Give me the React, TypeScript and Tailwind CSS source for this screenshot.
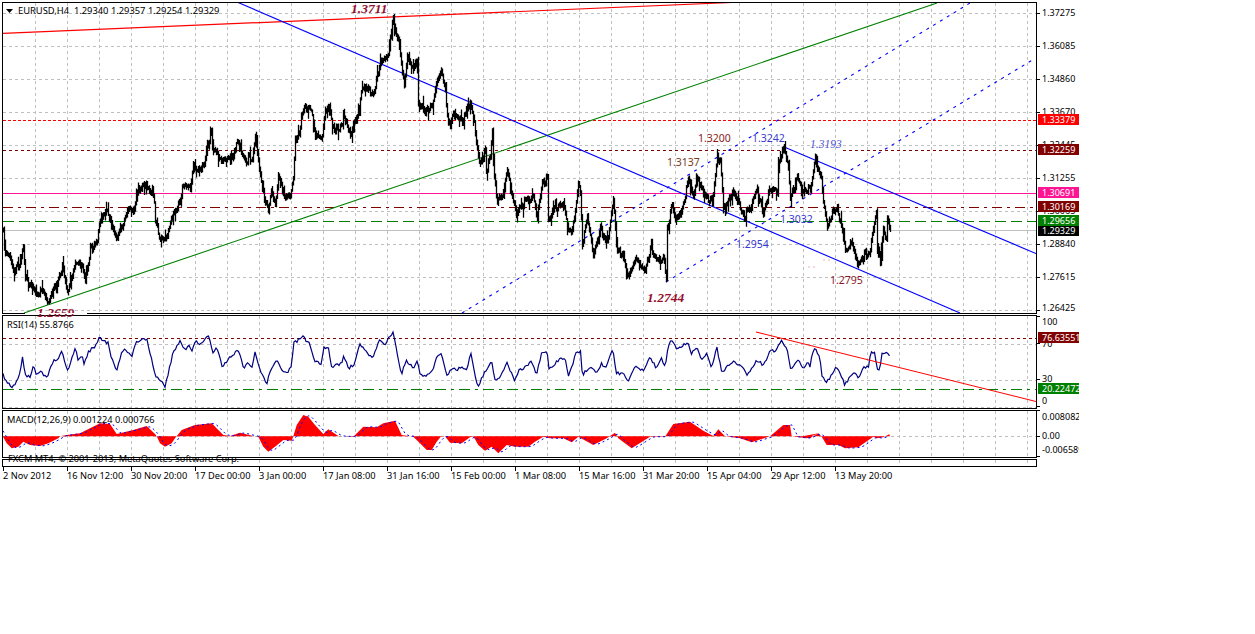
import { useMemo } from "react";

type Pt = [number, number];

// price path traced from the chart, in page pixels
const PRICE: Pt[] = [
  [3,230],[5,253],[10,258],[13,273],[20,263],[23,247],[25,277],[33,287],[36,295],[43,290],[48,302],[55,287],[62,268],[68,293],[75,263],[82,267],[85,282],[90,250],[97,243],[100,218],[108,213],[112,230],[117,240],[125,217],[128,208],[133,215],[137,195],[146,180],[148,190],[154,200],[155,220],[160,240],[167,238],[173,213],[180,203],[182,188],[190,190],[193,167],[203,167],[207,147],[211,132],[213,150],[222,163],[230,160],[238,140],[245,160],[252,157],[255,133],[260,173],[263,193],[268,210],[271,190],[275,207],[278,177],[283,193],[290,200],[293,180],[295,140],[299,137],[301,113],[304,105],[312,113],[315,137],[322,137],[325,110],[329,107],[332,128],[342,127],[343,113],[348,133],[353,130],[358,110],[362,85],[373,95],[377,78],[382,57],[388,53],[393,20],[398,40],[402,73],[404,83],[407,53],[413,70],[417,57],[418,107],
  [422,103],[425,113],[432,103],[435,87],[442,72],[445,93],[448,123],[455,113],[462,120],[470,100],[473,113],[475,137],[480,163],[485,150],[486,170],[490,157],[492,127],[494,180],[497,200],[502,193],[507,170],[512,197],[516,217],[520,207],[528,200],[533,195],[537,217],[542,182],[547,180],[548,220],[553,210],[563,200],[567,227],[572,233],[578,185],[580,193],[582,243],[587,217],[593,253],[600,227],[607,243],[613,200],[617,250],[623,253],[628,278],[635,260],[645,273],[650,248],[660,263],[664,257],[666,282],[667,230],[672,203],[675,220],[682,207],[688,182],[693,197],[697,175],[702,190],[712,203],[717,158],[720,160],[723,207],[733,190],[743,217],[750,210],[757,190],[763,213],[770,187],[777,193],[778,163],[783,148],[788,163],[790,200],[797,177],[803,193],[810,190],[815,160],[821,180],[823,203],[827,230],[830,217],[837,207],[842,230],[845,253],[852,243],[857,267],[865,253],[870,253],[872,230],[876,213],[877,247],[880,260],[883,227],[886,237],[887,215],[890,230],
];

// rsi and macd were read off 3x crops, so these stay in crop units
const RSI_A: Pt[] = [[8,185],[15,210],[35,232],[50,215],[60,185],[68,142],[75,195],[90,200],[100,170],[110,195],[125,185],[140,205],[160,150],[170,155],[185,120],[203,185],[225,115],[235,150],[250,135],[252,165],[265,125],[285,110],[298,85],[325,100],[335,145],[350,180],[365,125],[375,120],[395,140],[410,95],[440,85],[455,150],[468,200],[495,228],[505,190],[520,125],[540,95],[555,120],[570,105],[575,125],[585,95],[605,105],[625,72],[640,130],[650,115],[668,172],[690,140],[715,120],[733,180],[740,155],[755,175],[765,125],[780,180],[800,225],[810,185],[830,150],[845,180],[860,190],[875,170],[880,100],[910,80],[930,105],[945,155],[965,160],[970,115],[985,112],[993,170],[1025,160],[1030,135],[1045,175],[1062,165],[1080,100],[1100,130],[1118,140],[1140,90],[1155,105],[1178,65],[1190,120],[1205,195],[1218,150],[1240,175],[1250,150]];
const RSI_B: Pt[] = [[0,190],[15,200],[40,180],[48,145],[65,130],[80,200],[95,175],[110,180],[125,170],[140,180],[152,128],[165,200],[175,230],[190,195],[215,155],[225,210],[240,205],[260,155],[285,215],[295,185],[315,170],[335,155],[350,195],[365,125],[382,125],[385,180],[410,155],[435,140],[445,200],[470,125],[482,125],[487,195],[510,170],[530,190],[545,160],[555,175],[578,120],[590,190],[610,190],[625,218],[645,170],[670,180],[690,140],[710,175],[725,145],[735,175],[745,105],[755,90],[770,115],[805,100],[815,130],[830,110],[845,150],[860,130],[875,175],[890,110],[905,185],[940,155],[970,170],[980,195],[1010,150],[1030,165],[1050,125],[1070,120],[1085,90],[1105,130],[1110,180],[1130,155],[1140,155],[1150,180],[1165,155],[1170,175]];
const RSI_C: Pt[] = [[8,185],[25,170],[45,112],[60,145],[65,195],[80,218],[95,195],[110,170],[135,225],[155,190],[165,190],[175,205],[190,175],[205,170],[212,130],[225,128],[232,180],[238,185],[245,135],[262,122],[270,145]];

const MACD_A: Pt[] = [[8,379],[20,400],[35,415],[55,410],[70,395],[90,405],[120,408],[145,400],[175,385],[180,379],[200,375],[240,370],[300,340],[330,342],[350,372],[400,360],[440,348],[465,372],[470,379],[480,400],[495,410],[515,400],[525,385],[530,379],[545,360],[585,345],[635,340],[670,375],[690,378],[720,368],[760,378],[775,380],[790,410],[805,425],[825,410],[850,390],[875,392],[880,379],[890,345],[910,315],[925,320],[945,345],[970,372],[985,358],[1015,378],[1060,380],[1090,350],[1130,352],[1150,340],[1185,332],[1205,375],[1240,380]];
const MACD_B: Pt[] = [[0,400],[20,420],[35,420],[50,395],[62,380],[75,379],[90,398],[125,400],[150,382],[160,379],[175,405],[195,422],[215,410],[235,430],[260,405],[285,410],[325,410],[345,395],[370,380],[390,385],[430,385],[455,397],[475,380],[520,405],[560,385],[585,368],[595,385],[635,415],[690,380],[735,380],[760,342],[810,335],[850,362],[880,378],[895,358],[915,379],[960,385],[995,397],[1050,379],[1090,345],[1110,345],[1115,379],[1160,385],[1195,370]];
const MACD_C: Pt[] = [[0,380],[30,385],[55,370],[65,380],[80,405],[115,405],[135,415],[175,412],[220,380],[230,385],[250,382],[268,373]];

const shift = (pts: Pt[], x0: number, y0: number): Pt[] => pts.map(([x, y]) => [x0 + x / 3, y0 + y / 3]);

const rsiPts = [...shift(RSI_A, 0, 310), ...shift(RSI_B, 420, 310), ...shift(RSI_C, 800, 310)];
const macdPts = [...shift(MACD_A, 0, 310), ...shift(MACD_B, 420, 310), ...shift(MACD_C, 800, 310)];

const GRID_X = Array.from({ length: 32 }, (_, i) => 35.5 + i * 32);

function rng(seed: number) {
  let s = seed;
  return () => {
    s = (s + 0x6d2b79f5) | 0;
    let t = Math.imul(s ^ (s >>> 15), 1 | s);
    t = (t + Math.imul(t ^ (t >>> 7), 61 | t)) ^ t;
    return ((t ^ (t >>> 14)) >>> 0) / 4294967296;
  };
}

function interp(pts: Pt[], x: number) {
  for (let i = 1; i < pts.length; i++) {
    if (x <= pts[i][0]) {
      const [x0, y0] = pts[i - 1];
      const [x1, y1] = pts[i];
      return y0 + ((y1 - y0) * (x - x0)) / Math.max(x1 - x0, 0.01);
    }
  }
  return pts[pts.length - 1][1];
}

const line = (pts: Pt[]) => pts.map(([x, y], i) => `${i ? "L" : "M"}${x.toFixed(1)} ${y.toFixed(1)}`).join("");

// one vertical stroke per pixel, always reaching back to the previous close so the series has no gaps
function buildBars() {
  const r = rng(11);
  let d = "";
  let wobble = 0;
  let prev = interp(PRICE, 3);
  for (let x = 3; x <= 890; x++) {
    if (x % 2 === 0) wobble = (r() - 0.5) * 7;
    const c = interp(PRICE, x) + wobble;
    let hi = Math.min(c, prev) - 1 - r() * 3;
    let lo = Math.max(c, prev) + 1 + r() * 3;
    const spike = r();
    if (spike < 0.08) hi -= 6;
    else if (spike < 0.16) lo += 6;
    d += `M${x + 0.5} ${lo.toFixed(1)}V${hi.toFixed(1)}`;
    prev = c;
  }
  return d;
}

function buildRsi() {
  const r = rng(5);
  const pts: Pt[] = [];
  for (let x = 3; x <= 890; x += 1.5) {
    pts.push([x, interp(rsiPts, x) + (r() - 0.5) * 3]);
  }
  return line(pts);
}

function GridX({ y1, y2 }: { y1: number; y2: number }) {
  return (
    <g stroke="#c0c0c0" strokeDasharray="3 3" shapeRendering="crispEdges">
      {GRID_X.map(x => (
        <line key={x} x1={x} x2={x} y1={y1} y2={y2} />
      ))}
    </g>
  );
}

function GridY({ ys }: { ys: number[] }) {
  return (
    <g stroke="#c0c0c0" strokeDasharray="3 3" shapeRendering="crispEdges">
      {ys.map(y => (
        <line key={y} x1={3} x2={1036} y1={y + 0.5} y2={y + 0.5} />
      ))}
    </g>
  );
}

function MainChart() {
  const bars = useMemo(buildBars, []);
  return (
    <svg className="block w-full h-full" viewBox="3 3 1033 310">
      <GridX y1={3} y2={313} />
      <GridY ys={[13, 46, 79, 112, 145, 178, 211, 244, 277, 310]} />
      <line x1={3} x2={1036} y1={120.5} y2={120.5} stroke="#ff0000" strokeDasharray="3 2" shapeRendering="crispEdges" />
      <path d="M3 150.5H783M843 150.5H1036" stroke="#800000" strokeDasharray="3 3" shapeRendering="crispEdges" />
      <line x1={3} x2={1036} y1={193.5} y2={193.5} stroke="#ff1493" shapeRendering="crispEdges" />
      <line x1={3} x2={1036} y1={207.5} y2={207.5} stroke="#800000" strokeDasharray="10 5 3 5" shapeRendering="crispEdges" />
      <line x1={3} x2={1036} y1={221.5} y2={221.5} stroke="#008000" strokeDasharray="11 5" shapeRendering="crispEdges" />
      <line x1={3} x2={1036} y1={230.5} y2={230.5} stroke="#c0c0c0" shapeRendering="crispEdges" />
      <line x1={2} y1={33.5} x2={732} y2={2.5} stroke="#ff0000" strokeWidth={1.2} />
      <line x1={24} y1={313} x2={937} y2={3} stroke="#008000" strokeWidth={1.1} />
      <line x1={237} y1={2} x2={960} y2={313} stroke="#0000ff" strokeWidth={1.1} />
      <line x1={783} y1={146.5} x2={1036} y2={253.5} stroke="#0000ff" strokeWidth={1.1} />
      <line x1={462} y1={313} x2={970} y2={3} stroke="#0000ff" strokeWidth={1.1} strokeDasharray="3 5" />
      <line x1={666} y1={282} x2={1034} y2={59} stroke="#0000ff" strokeWidth={1.1} strokeDasharray="3 5" />
      <path d="M808 267H818M823 260H832" stroke="#e8b4b4" strokeDasharray="2 3" />
      <path d={bars} stroke="#000000" strokeWidth={1.3} fill="none" />
      <polygon points="6,9 13,9 9.5,13" fill="#000000" />
    </svg>
  );
}

function RsiChart() {
  const d = useMemo(buildRsi, []);
  return (
    <svg className="block w-full h-full" viewBox="3 316 1033 92">
      <GridX y1={316} y2={408} />
      <GridY ys={[344, 380, 407]} />
      <line x1={3} x2={1036} y1={338.5} y2={338.5} stroke="#800000" strokeDasharray="3 3" shapeRendering="crispEdges" />
      <line x1={3} x2={1036} y1={389.5} y2={389.5} stroke="#008000" strokeDasharray="11 5 3 5" shapeRendering="crispEdges" />
      <path d={d} stroke="#000080" strokeWidth={1.2} fill="none" />
      <line x1={756} y1={332} x2={1036} y2={401.5} stroke="#ff0000" strokeWidth={1.1} />
    </svg>
  );
}

function MacdChart() {
  const zero = 436.3;
  const hist = `M3 ${zero}${macdPts.map(([x, y]) => `L${x.toFixed(1)} ${y.toFixed(1)}`).join("")}L890 ${zero}Z`;
  const signal = useMemo(() => {
    const pts: Pt[] = [];
    for (let x = 3; x <= 890; x += 3) {
      pts.push([x, (interp(macdPts, x - 2) + interp(macdPts, x - 5)) / 2]);
    }
    return line(pts);
  }, []);
  return (
    <svg className="block w-full h-full" viewBox="3 411 1033 46">
      <GridX y1={411} y2={457} />
      <GridY ys={[436]} />
      <path d={hist} fill="#ff0000" />
      <path d={signal} stroke="#0000ff" fill="none" strokeDasharray="2 3" />
    </svg>
  );
}

function StubChart() {
  return (
    <svg className="block w-full h-full" viewBox="3 460 1033 6">
      <GridX y1={460} y2={466} />
    </svg>
  );
}

const PRICE_TICKS = [
  { text: "1.37275", top: "top-[5px]", mark: "top-[11px]" },
  { text: "1.36085", top: "top-[38px]", mark: "top-[44px]" },
  { text: "1.34860", top: "top-[71px]", mark: "top-[77px]" },
  { text: "1.33670", top: "top-[104px]", mark: "top-[110px]" },
  { text: "1.32445", top: "top-[137px]", mark: "top-[143px]" },
  { text: "1.31255", top: "top-[170px]", mark: "top-[176px]" },
  { text: "1.30065", top: "top-[203px]", mark: "top-[209px]" },
  { text: "1.28840", top: "top-[236px]", mark: "top-[242px]" },
  { text: "1.27615", top: "top-[269px]", mark: "top-[275px]" },
  { text: "1.26425", top: "top-[300px]", mark: "top-[308px]" },
];

const PRICE_TAGS = [
  { text: "1.33379", cls: "top-[112px] bg-[#ff0000]" },
  { text: "1.32259", cls: "top-[142px] bg-[#800000]" },
  { text: "1.30691", cls: "top-[185px] bg-[#ff1493]" },
  { text: "1.30169", cls: "top-[199px] bg-[#800000]" },
  { text: "1.29329", cls: "top-[223px] bg-[#000000]" },
  { text: "1.29656", cls: "top-[213px] bg-[#008000]" },
];

const RSI_TICKS = [
  { text: "100", top: "top-px", mark: "top-[1px]" },
  { text: "70", top: "top-[23px]", mark: "top-[28px]" },
  { text: "30", top: "top-[58px]", mark: "top-[64px]" },
  { text: "0", top: "top-[80px]", mark: "top-[91px]" },
];

const RSI_TAGS = [
  { text: "76.63551", cls: "top-[17px] bg-[#800000]" },
  { text: "20.22472", cls: "top-[68px] bg-[#008000]" },
];

const MACD_TICKS = [
  { text: "0.008082", top: "top-[1px]", mark: "top-[0px]" },
  { text: "0.00", top: "top-[20px]", mark: "top-[26px]" },
  { text: "-0.006589", top: "top-[34px]", mark: "top-[46px]" },
];

const DATES = [
  "2 Nov 2012", "16 Nov 12:00", "30 Nov 20:00", "17 Dec 00:00", "3 Jan 00:00", "17 Jan 08:00", "31 Jan 16:00",
  "15 Feb 00:00", "1 Mar 08:00", "15 Mar 16:00", "31 Mar 20:00", "15 Apr 04:00", "29 Apr 12:00", "13 May 20:00",
];

const NOTES = [
  { text: "1.3711", cls: "left-[348px] top-[-1px] font-['Liberation_Serif',serif] font-bold italic text-[13.5px] text-[#96102e]" },
  { text: "1.2659", cls: "left-[34px] top-[303px] font-['Liberation_Serif',serif] font-bold italic text-[13.5px] text-[#96102e]" },
  { text: "1.2744", cls: "left-[644px] top-[288px] font-['Liberation_Serif',serif] font-bold italic text-[13.5px] text-[#96102e]" },
  { text: "1.3200", cls: "left-[695px] top-[128px] text-[10.5px] text-[#8b1a1a]" },
  { text: "1.3242", cls: "left-[749px] top-[128px] text-[10.5px] text-[#3a3ad0]" },
  { text: "1.3193", cls: "left-[807px] top-[134px] italic font-['Liberation_Serif',serif] text-[11.5px] text-[#5252d6]" },
  { text: "1.3137", cls: "left-[664px] top-[152px] text-[10.5px] text-[#7a3b1a]" },
  { text: "1.3032", cls: "left-[777px] top-[209px] text-[10.5px] text-[#3a3ad0]" },
  { text: "1.2954", cls: "left-[733px] top-[234px] text-[10.5px] text-[#3a3ad0]" },
  { text: "1.2795", cls: "left-[827px] top-[270px] text-[10.5px] text-[#8b1a2a]" },
];

type Tick = { text: string; top: string; mark: string };
type Tag = { text: string; cls: string };

function Axis({ ticks, tags }: { ticks: Tick[]; tags?: Tag[] }) {
  return (
    <div className="relative w-[42px] overflow-hidden text-[9px] text-black">
      {ticks.map(t => (
        <div key={t.text}>
          <div className={`absolute left-0 w-[3px] h-px bg-black ${t.mark}`} />
          <span className={`absolute left-[5px] leading-3 whitespace-nowrap ${t.top}`}>{t.text}</span>
        </div>
      ))}
      {tags?.map(t => (
        <span key={t.text} className={`absolute left-px w-[41px] h-[11px] pl-[4px] leading-[11px] overflow-hidden text-white whitespace-nowrap ${t.cls}`}>
          {t.text}
        </span>
      ))}
    </div>
  );
}

export default function App() {
  return (
    <div className="w-[1255px] h-[634px] bg-white overflow-hidden pt-[2px] pl-[2px] font-['Noto_Sans',sans-serif] text-black">
      <div className="flex h-[312px] mb-px">
        <div className="relative z-10 w-[1035px] border border-black">
          <MainChart />
          <span className="absolute left-[15px] top-px text-[9.35px] leading-[14px] whitespace-pre">EURUSD,H4  1.29340 1.29357 1.29254 1.29329</span>
          {NOTES.map(n => (
            <span key={n.text} className={`absolute leading-[14px] whitespace-nowrap ${n.cls}`}>
              {n.text}
            </span>
          ))}
          <div className="absolute left-[22px] bottom-[-1px] w-[62px] h-px bg-white" />
        </div>
        <Axis ticks={PRICE_TICKS} tags={PRICE_TAGS} />
      </div>
      <div className="flex h-[94px] mb-px">
        <div className="relative w-[1035px] border border-black">
          <RsiChart />
          <span className="absolute left-[4px] top-[2px] text-[9.25px] leading-[14px]">RSI(14) 55.8766</span>
        </div>
        <Axis ticks={RSI_TICKS} tags={RSI_TAGS} />
      </div>
      <div className="flex h-[48px] mb-px">
        <div className="relative z-10 w-[1035px] border border-black">
          <MacdChart />
          <span className="absolute left-[4px] top-[2px] text-[9.25px] leading-[14px]">MACD(12,26,9) 0.001224 0.000766</span>
          <span className="absolute left-[5px] top-[41px] text-[9.25px] leading-[14px] whitespace-nowrap">FXCM MT4, © 2001-2013, MetaQuotes Software Corp.</span>
        </div>
        <Axis ticks={MACD_TICKS} />
      </div>
      <div className="w-[1035px] h-[8px] border border-black">
        <StubChart />
      </div>
      <div className="flex pl-px text-[9.25px] text-black">
        {DATES.map(d => (
          <div key={d} className="w-[64px]">
            <div className="w-px h-[4px] bg-black" />
            <div className="whitespace-nowrap leading-3 -mt-px">{d}</div>
          </div>
        ))}
      </div>
    </div>
  );
}
